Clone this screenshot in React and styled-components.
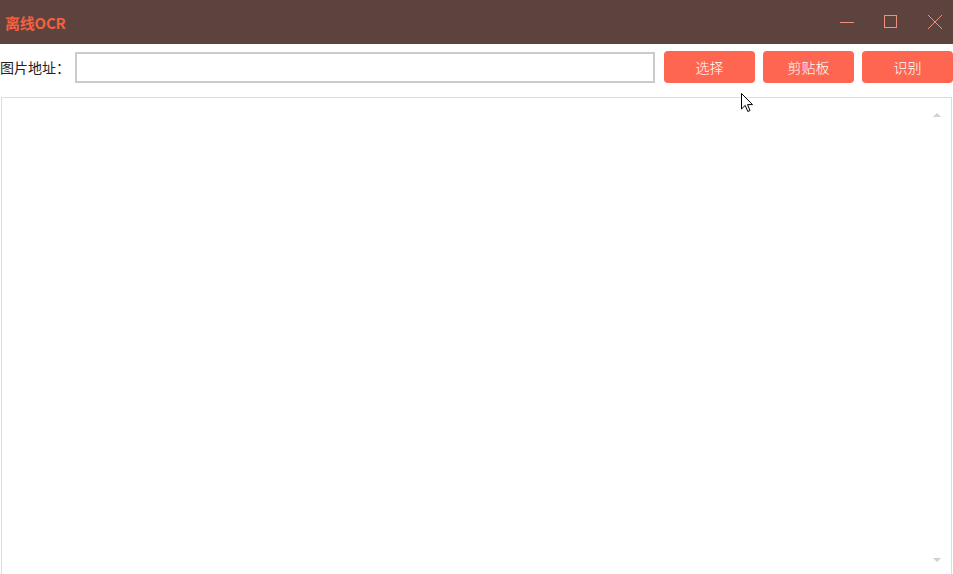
import React from 'react'
import styled, { createGlobalStyle } from 'styled-components'

const GlobalStyle = createGlobalStyle`
  html, body {
    margin: 0;
    padding: 0;
    background: #ffffff;
    overflow: hidden;
  }
  body {
    font-family: "Noto Sans CJK SC", "Noto Sans", sans-serif;
  }
`

const Window = styled.div`
  position: relative;
  width: 953px;
  height: 574px;
  display: flex;
  flex-direction: column;
  background: #ffffff;
  overflow: hidden;
`

const TitleBar = styled.div`
  height: 44px;
  flex: none;
  display: flex;
  align-items: center;
  justify-content: space-between;
  background: #5d433e;
  padding-left: 5px;
  box-sizing: border-box;
`

const Title = styled.div`
  color: #f4603f;
  font-size: 15px;
  font-weight: 700;
  letter-spacing: -0.2px;
`

const Controls = styled.div`
  display: flex;
  gap: 8px;
  height: 100%;
`

const CtrlButton = styled.div`
  width: 36px;
  height: 100%;
  display: flex;
  align-items: center;
  justify-content: center;
`

const Toolbar = styled.div`
  display: flex;
  align-items: center;
  padding-top: 7px;
  height: 32px;
  flex: none;
`

const Label = styled.label`
  font-size: 14px;
  color: #222;
  width: 75px;
  flex: none;
  line-height: 32px;
`

const PathInput = styled.input`
  width: 580px;
  height: 31px;
  box-sizing: border-box;
  border: 2px solid #cbcbcb;
  margin: 1px 9px 0 0;
  padding: 0 6px;
  outline: none;
  flex: none;
`

const Buttons = styled.div`
  display: flex;
  gap: 8px;
`

const Button = styled.button`
  width: 91px;
  height: 32px;
  border: none;
  border-radius: 4px;
  background: #ff6652;
  color: #ffffff;
  font-family: "Noto Sans CJK SC", sans-serif;
  font-size: 14px;
  font-weight: 300;
  padding: 0;
  cursor: pointer;
`

const TextArea = styled.textarea`
  margin: 14px 1px 0 1px;
  flex: 1;
  border: 1px solid #dcdcdc;
  border-bottom: none;
  resize: none;
  outline: none;
  font-family: "Noto Sans CJK SC", sans-serif;
  overflow: hidden;
`

const ScrollMark = styled.span`
  position: absolute;
  right: 12px;
  width: 8px;
  height: 4px;
  ${p => (p.$top ? 'top: 113px;' : 'bottom: 12px;')}
  display: flex;
  align-items: center;
  justify-content: center;
`

const Pointer = styled.svg`
  position: absolute;
  left: 741px;
  top: 93px;
`

export default function App() {
  return (
    <Window>
      <GlobalStyle />
      <TitleBar>
        <Title>离线OCR</Title>
        <Controls>
          <CtrlButton>
            <svg width="14" height="14" viewBox="0 0 14 14">
              <line x1="0" y1="7.5" x2="14" y2="7.5" stroke="#f0907f" strokeWidth="1" />
            </svg>
          </CtrlButton>
          <CtrlButton>
            <svg width="14" height="14" viewBox="0 0 14 14">
              <rect x="0.5" y="0.5" width="12" height="12" fill="none" stroke="#f0907f" strokeWidth="1" />
            </svg>
          </CtrlButton>
          <CtrlButton>
            <svg width="16" height="16" viewBox="0 0 16 16">
              <path d="M1 1 L15 15 M15 1 L1 15" stroke="#f0907f" strokeWidth="1" />
            </svg>
          </CtrlButton>
        </Controls>
      </TitleBar>
      <Toolbar>
        <Label>图片地址：</Label>
        <PathInput type="text" />
        <Buttons>
          <Button>选择</Button>
          <Button>剪贴板</Button>
          <Button>识别</Button>
        </Buttons>
      </Toolbar>
      <TextArea />
      <ScrollMark $top>
        <svg width="8" height="4" viewBox="0 0 8 4">
          <path d="M0 4 L4 0 L8 4 Z" fill="#d0d0d0" />
        </svg>
      </ScrollMark>
      <ScrollMark>
        <svg width="8" height="4" viewBox="0 0 8 4">
          <path d="M0 0 L4 4 L8 0 Z" fill="#d0d0d0" />
        </svg>
      </ScrollMark>
      <Pointer width="13" height="20" viewBox="0 0 13 20">
        <path d="M0.5 0.5 L0.5 16 L4.2 12.4 L6.8 18.5 L9 17.5 L6.5 11.6 L11.5 11.6 Z" fill="#ffffff" stroke="#000000" strokeWidth="1" />
      </Pointer>
    </Window>
  )
}
